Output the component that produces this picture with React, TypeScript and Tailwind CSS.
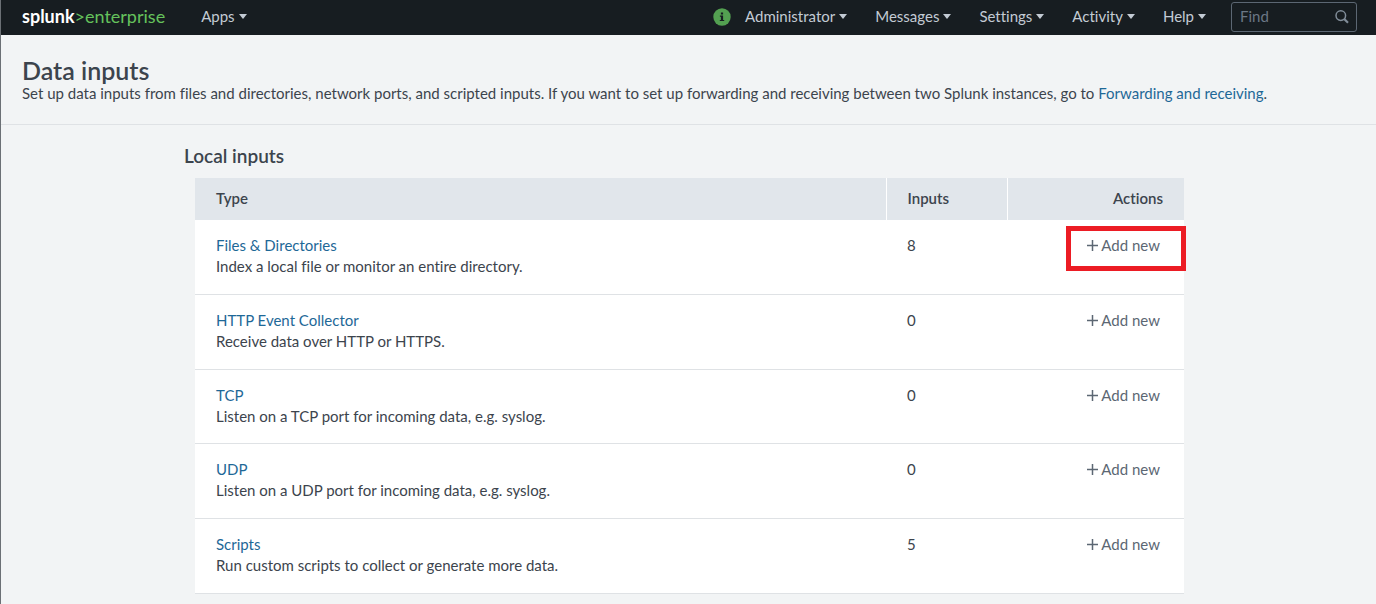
import type { ReactNode } from "react";

const inputs = [
  { name: "Files & Directories", description: "Index a local file or monitor an entire directory.", count: 8, highlighted: true },
  { name: "HTTP Event Collector", description: "Receive data over HTTP or HTTPS.", count: 0 },
  { name: "TCP", description: "Listen on a TCP port for incoming data, e.g. syslog.", count: 0 },
  { name: "UDP", description: "Listen on a UDP port for incoming data, e.g. syslog.", count: 0 },
  { name: "Scripts", description: "Run custom scripts to collect or generate more data.", count: 5 },
];

const menus = ["Administrator", "Messages", "Settings", "Activity", "Help"];

function MenuButton({ children }: { children: ReactNode }) {
  return (
    <button type="button" className="flex items-center gap-1 text-[#c3cbd4]">
      {children}
      <svg className="h-[5px] w-2" viewBox="0 0 8 5" fill="currentColor" aria-hidden="true">
        <path d="M0 0h8L4 5z" />
      </svg>
    </button>
  );
}

function InfoIcon() {
  return (
    <svg className="size-[18px]" viewBox="0 0 18 18" aria-hidden="true">
      <circle cx="9" cy="9" r="8.7" fill="#53a051" />
      <path fill="#171d21" d="M7.9 4.6h2.2v1.8H7.9zM6.9 7.6h3.2v4.3h1.1v1.2H6.8v-1.2h1.1V8.8h-1z" />
    </svg>
  );
}

function SearchIcon() {
  return (
    <svg className="size-[14px] shrink-0 text-[#818d99]" viewBox="0 0 14 14" fill="none" stroke="currentColor" aria-hidden="true">
      <circle cx="5.8" cy="5.6" r="4.8" strokeWidth="1.5" />
      <path d="M9.2 9l3.8 3.7" strokeWidth="2.2" />
    </svg>
  );
}

export default function App() {
  return (
    <div className="min-h-screen border-l border-[#6b7075] bg-[#f2f4f5] font-['Lato',sans-serif] text-[15px] leading-[21px] text-[#3c444d] [font-variant-ligatures:none]">
      <header className="flex h-[35px] items-center bg-[#171d21] pr-[19px] pb-[2px] pl-[21px]">
        <a href="#home" className="text-[18px] text-[#65c25c]">
          <span className="font-bold text-white">splunk</span>&gt;enterprise
        </a>
        <div className="ml-9">
          <MenuButton>Apps</MenuButton>
        </div>
        <nav className="ml-auto flex items-center gap-7">
          <div className="flex items-center gap-[14px]">
            <button type="button" aria-label="Health status">
              <InfoIcon />
            </button>
            <MenuButton>{menus[0]}</MenuButton>
          </div>
          {menus.slice(1).map((menu) => (
            <MenuButton key={menu}>{menu}</MenuButton>
          ))}
        </nav>
        <label className="ml-[25px] flex h-[30px] w-[126px] items-center rounded-[3px] border border-[#5c6773] pr-[7px] pl-2">
          <input type="text" aria-label="Find" placeholder="Find" className="w-full min-w-0 bg-transparent text-[#c3cbd4] outline-none placeholder:text-[#6b7785]" />
          <SearchIcon />
        </label>
      </header>

      <div className="border-b border-[#dfe2e5] px-[21px] pt-[22px] pb-5">
        <h1 className="text-[25px] leading-[26px] font-semibold">Data inputs</h1>
        <p>
          Set up data inputs from files and directories, network ports, and scripted inputs. If you want to set up forwarding and receiving between two Splunk instances, go to{" "}
          <a href="#forwarding" className="text-[#1e6897]">Forwarding and receiving</a>.
        </p>
      </div>

      <main className="mx-auto max-w-[1009px] pt-[19px]">
        <h2 className="text-[19px] leading-6 font-semibold">Local inputs</h2>
        <div className="mt-[10px] mr-[9px] ml-[11px]">
          <table className="h-[416px] w-full table-fixed border-collapse bg-white text-left">
            <thead>
              <tr className="h-[42px] bg-[#e1e6eb]">
                <th scope="col" className="border-r border-white px-[21px] pb-[2px] font-semibold">Type</th>
                <th scope="col" className="w-[121px] border-r border-white px-[21px] pb-[2px] font-semibold">Inputs</th>
                <th scope="col" className="w-[177px] px-[21px] pb-[2px] text-right font-semibold">Actions</th>
              </tr>
            </thead>
            <tbody>
              {inputs.map((input) => (
                <tr key={input.name} className="border-b border-[#dfe2e5] align-top">
                  <td className="px-[21px] pt-[15px]">
                    <a href="#input" className="text-[#1e6897]">{input.name}</a>
                    <p>{input.description}</p>
                  </td>
                  <td className="px-[21px] pt-[15px]">{input.count}</td>
                  <td className="relative pt-[15px] pr-6 text-right">
                    <button type="button" className="inline-flex items-center gap-[3px] text-[#5c6773]">
                      <svg className="size-[11px]" viewBox="0 0 11 11" stroke="currentColor" strokeWidth="1.5" aria-hidden="true">
                        <path d="M5.5 0v11M0 5.5h11" />
                      </svg>
                      Add new
                    </button>
                    {input.highlighted && (
                      <span className="pointer-events-none absolute top-[6px] -right-[2px] h-[45px] w-[120px] border-5 border-[#ec1c24]" />
                    )}
                  </td>
                </tr>
              ))}
            </tbody>
          </table>
        </div>
      </main>
    </div>
  );
}
